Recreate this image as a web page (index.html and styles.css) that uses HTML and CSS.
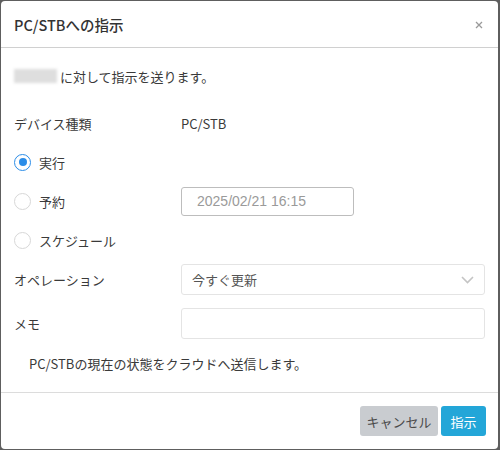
FILE: index.html
```html
<!DOCTYPE html>
<html lang="ja">
<head>
<meta charset="utf-8">
<link rel="stylesheet" href="styles.css">
</head>
<body>
<div class="modal">
  <div class="modal-header">
    <h4 class="modal-title">PC/STBへの指示</h4>
    <span class="close">
      <svg width="8" height="8" viewBox="0 0 8 8"><path d="M1 1L7 7M7 1L1 7" stroke="#9a9a9a" stroke-width="1.3"/></svg>
    </span>
  </div>
  <div class="modal-body">
    <div class="intro"><span class="masked"></span>に対して指示を送ります。</div>
    <div class="row device"><span class="label">デバイス種類</span><span class="value">PC/STB</span></div>
    <div class="row radio-row">
      <label class="radio"><span class="circle checked"></span>実行</label>
    </div>
    <div class="row radio-row">
      <label class="radio"><span class="circle"></span>予約</label>
      <div class="date-input">2025/02/21 16:15</div>
    </div>
    <div class="row radio-row">
      <label class="radio"><span class="circle"></span>スケジュール</label>
    </div>
    <div class="row field op">
      <span class="label">オペレーション</span>
      <div class="select">今すぐ更新
        <svg class="chev" width="13" height="8" viewBox="0 0 13 8"><path d="M1 1L6.5 6.5L12 1" fill="none" stroke="#c4c4c4" stroke-width="1.6"/></svg>
      </div>
    </div>
    <div class="row field memo">
      <span class="label">メモ</span>
      <div class="text-input"></div>
    </div>
    <div class="note">PC/STBの現在の状態をクラウドへ送信します。</div>
  </div>
  <div class="modal-footer">
    <button class="btn btn-cancel">キャンセル</button>
    <button class="btn btn-primary">指示</button>
  </div>
</div>
</body>
</html>
```
FILE: styles.css
```css
html, body {
  margin: 0;
  padding: 0;
}
body {
  width: 500px;
  height: 450px;
  background: #5e5e5e;
  font-family: "Noto Sans CJK JP", "Noto Sans", sans-serif;
  font-size: 13px;
  color: #3a3a3a;
  overflow: hidden;
}
.modal {
  margin: 1px 0 0 1px;
  width: 497px;
  height: 448px;
  background: #fff;
  border-radius: 4px;
  display: flex;
  flex-direction: column;
  box-sizing: border-box;
}
.modal-header {
  height: 47px;
  border-bottom: 1px solid #d0d0d0;
  display: flex;
  align-items: center;
  justify-content: space-between;
  padding: 0 15px 0 13px;
  box-sizing: border-box;
}
.modal-title {
  margin: 0;
  font-size: 14.5px;
  font-weight: 500;
  color: #333;
}
.close {
  display: flex;
  margin-top: 2px;
}
.modal-body {
  padding: 16px 12px 17px 12px;
  display: flex;
  flex-direction: column;
  border-bottom: 1px solid #dcdcdc;
}
.intro {
  height: 24px;
  display: flex;
  align-items: center;
  margin-left: 1px;
}
.masked {
  display: inline-block;
  width: 43px;
  height: 14px;
  background: #dedede;
  filter: blur(1.5px);
  margin-right: 3px;
}
.row {
  display: flex;
  align-items: center;
}
.label {
  width: 168px;
  flex: none;
  padding-left: 1px;
  box-sizing: border-box;
}
.device {
  height: 24px;
  margin-top: 23px;
}
.radio-row {
  height: 30px;
  margin-top: 9px;
}
.device + .radio-row {
  margin-top: 12px;
}
.radio {
  width: 168px;
  flex: none;
  display: flex;
  align-items: center;
  gap: 8px;
  padding-left: 1px;
  box-sizing: border-box;
}
.circle {
  width: 15px;
  height: 15px;
  border-radius: 50%;
  border: 1px solid #d7d7d7;
  box-sizing: content-box;
  position: relative;
  flex: none;
}
.circle.checked {
  border-color: #2b8de8;
}
.circle.checked::after {
  content: "";
  position: absolute;
  left: 3.5px;
  top: 3.5px;
  width: 8px;
  height: 8px;
  border-radius: 50%;
  background: #2b8de8;
}
.date-input {
  width: 173px;
  height: 29px;
  border: 1px solid #bdbdbd;
  border-radius: 3px;
  box-sizing: border-box;
  padding-left: 15px;
  display: flex;
  align-items: center;
  font-family: "Liberation Sans", Arial, sans-serif;
  font-size: 14px;
  color: #9a9a9a;
}
.field .select,
.field .text-input {
  width: 304px;
  height: 31px;
  border: 1px solid #e4e4e4;
  border-radius: 3px;
  box-sizing: border-box;
}
.op {
  margin-top: 9px;
}
.select {
  display: flex;
  align-items: center;
  justify-content: space-between;
  padding: 0 10px 0 10px;
  color: #555;
}
.memo {
  margin-top: 13px;
}
.note {
  height: 24px;
  margin-top: 12px;
  padding-left: 16px;
  display: flex;
  align-items: center;
}
.modal-footer {
  display: flex;
  justify-content: flex-end;
  gap: 3px;
  padding: 13px 12px 0 0;
}
.btn {
  height: 30px;
  border: none;
  border-radius: 3px;
  font-family: "Noto Sans CJK JP", "Noto Sans", sans-serif;
  font-size: 13px;
  padding: 0;
}
.btn-cancel {
  width: 78px;
  background: #c9ccd0;
  color: #4a4a4a;
}
.btn-primary {
  width: 45px;
  background: #23a6d8;
  color: #fff;
}
```
